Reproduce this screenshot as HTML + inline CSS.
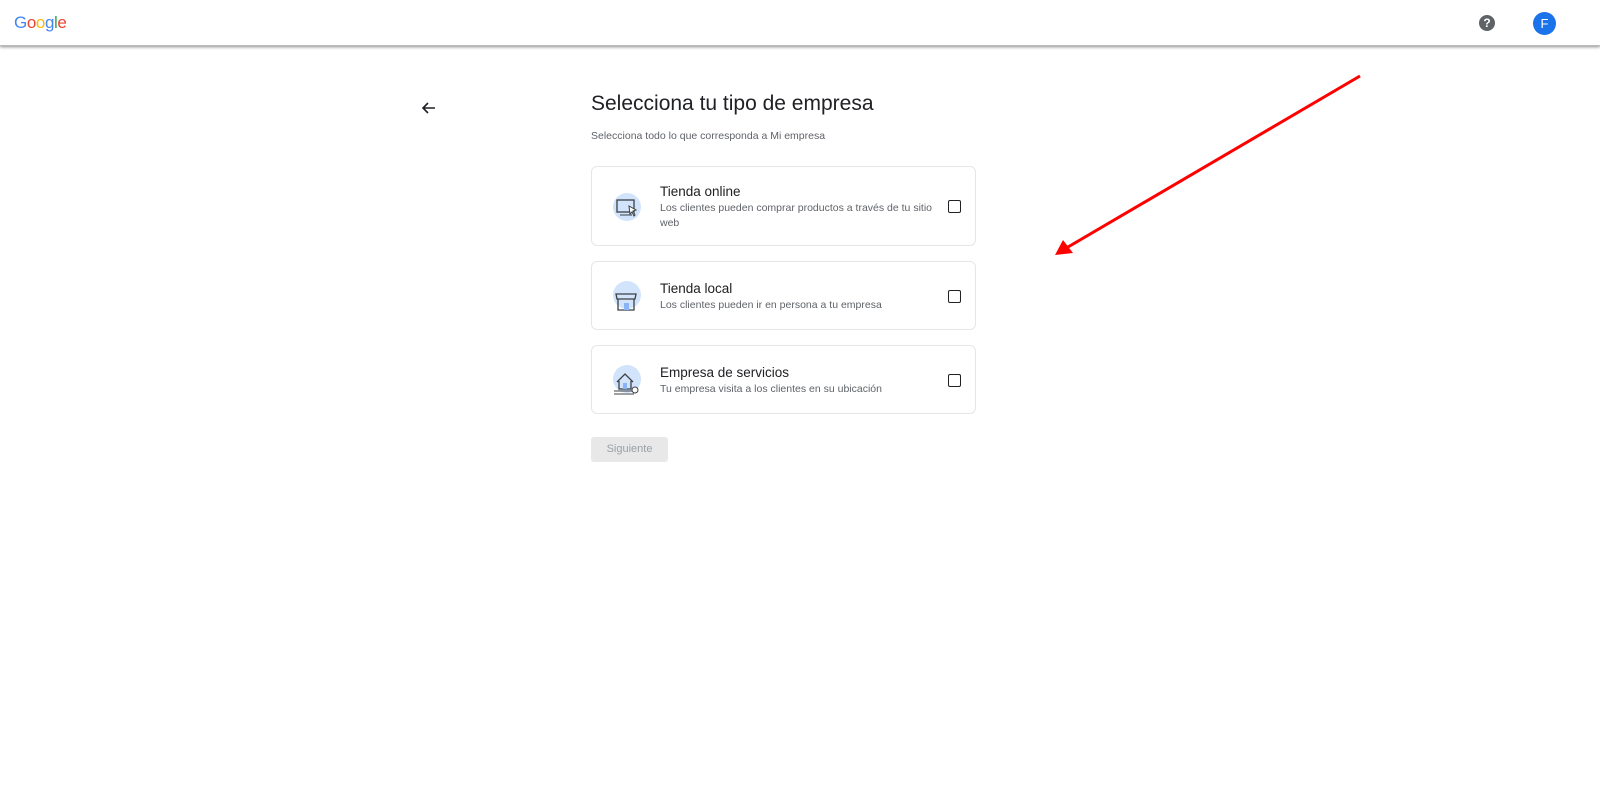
<!DOCTYPE html>
<html><head><meta charset="utf-8"><style>
body{margin:0;width:1600px;height:807px;background:#fff;font-family:"Liberation Sans",Arial,sans-serif;position:relative;overflow:hidden}
.hdr{position:absolute;left:0;top:0;width:1600px;height:45px;background:#fff;box-shadow:0 1px 3px rgba(0,0,0,.45);border-bottom:1px solid #bbb}
.logo{position:absolute;left:14px;top:13px;font-size:17px;letter-spacing:-.4px}
.help{position:absolute;left:1479px;top:15px;width:16px;height:16px;border-radius:50%;background:#5f6368;color:#fff;font-size:12px;font-weight:bold;text-align:center;line-height:16px}
.av{position:absolute;left:1533px;top:12px;width:23px;height:23px;border-radius:50%;background:#1a73e8;color:#fff;font-size:13px;text-align:center;line-height:23px}
h1{position:absolute;left:591px;top:92px;margin:0;font-weight:normal;font-size:21px;color:#202124}
.sub{position:absolute;left:591px;top:130px;font-size:10.5px;color:#5f6368}
.card{position:absolute;left:591px;width:385px;border:1px solid #e6e6e6;border-radius:6px;box-sizing:border-box}
.ic{position:absolute;left:21px;width:28px;height:28px;border-radius:50%;background:#d2e3fc}
.t{position:absolute;left:68px;font-size:13.5px;color:#202124}
.d{position:absolute;left:68px;font-size:10.5px;color:#5f6368;line-height:15px;width:280px}
.cb{position:absolute;left:356px;width:11px;height:11px;border:1.5px solid #202124;border-radius:2px}
.btn{position:absolute;left:591px;top:437px;width:77px;height:25px;background:#e8e8e8;border-radius:3px;color:#9aa0a6;font-size:11px;text-align:center;line-height:25px}
</style></head><body>
<div class="hdr">
<div class="logo"><span style="color:#4285f4">G</span><span style="color:#ea4335">o</span><span style="color:#fbbc05">o</span><span style="color:#4285f4">g</span><span style="color:#34a853">l</span><span style="color:#ea4335">e</span></div>
<div class="help">?</div><div class="av">F</div>
</div>
<svg style="position:absolute;left:420px;top:100px" width="18" height="16" viewBox="0 0 18 16"><path d="M15 8H3M8 3L3 8l5 5" stroke="#202124" stroke-width="1.6" fill="none"/></svg>
<h1>Selecciona tu tipo de empresa</h1>
<div class="sub">Selecciona todo lo que corresponda a Mi empresa</div>

<div class="card" style="top:166px;height:80px">
<div class="ic" style="top:26px"></div>
<svg style="position:absolute;left:23px;top:30px" width="26" height="22"><rect x="2" y="3" width="17" height="12" fill="none" stroke="#3c4043" stroke-width="1.3"/><path d="M5 18h12" stroke="#3c4043"/><path d="M14 9l7 4-3 1 2 4-1 1-2-4-2 2z" fill="#fff" stroke="#3c4043"/></svg>
<div class="t" style="top:17px">Tienda online</div>
<div class="d" style="top:34px">Los clientes pueden comprar productos a través de tu sitio web</div>
<div class="cb" style="top:33px"></div>
</div>

<div class="card" style="top:261px;height:69px">
<div class="ic" style="top:19px"></div>
<svg style="position:absolute;left:22px;top:26px" width="26" height="24"><path d="M2 6h20l-1 5H3z M4 11v11h16V11" fill="none" stroke="#3c4043" stroke-width="1.3"/><rect x="10" y="15" width="5" height="7" fill="#8ab4f8"/></svg>
<div class="t" style="top:19px">Tienda local</div>
<div class="d" style="top:36px">Los clientes pueden ir en persona a tu empresa</div>
<div class="cb" style="top:28px"></div>
</div>

<div class="card" style="top:345px;height:69px">
<div class="ic" style="top:19px"></div>
<svg style="position:absolute;left:20px;top:24px" width="28" height="26"><path d="M5 12L13 4l8 8M7 11v8h12v-8" fill="none" stroke="#3c4043" stroke-width="1.3"/><rect x="11" y="13" width="4" height="6" fill="#8ab4f8"/><path d="M2 21h20M2 24h20" stroke="#3c4043"/><circle cx="23" cy="20" r="3" fill="#fff" stroke="#3c4043"/></svg>
<div class="t" style="top:19px">Empresa de servicios</div>
<div class="d" style="top:36px">Tu empresa visita a los clientes en su ubicación</div>
<div class="cb" style="top:28px"></div>
</div>

<div class="btn">Siguiente</div>
<svg style="position:absolute;left:0;top:0" width="1600" height="807"><path d="M1360 76L1068 247" stroke="#f00" stroke-width="3"/><path d="M1055 255l8-15 10 13z" fill="#f00"/></svg>
</body></html>
